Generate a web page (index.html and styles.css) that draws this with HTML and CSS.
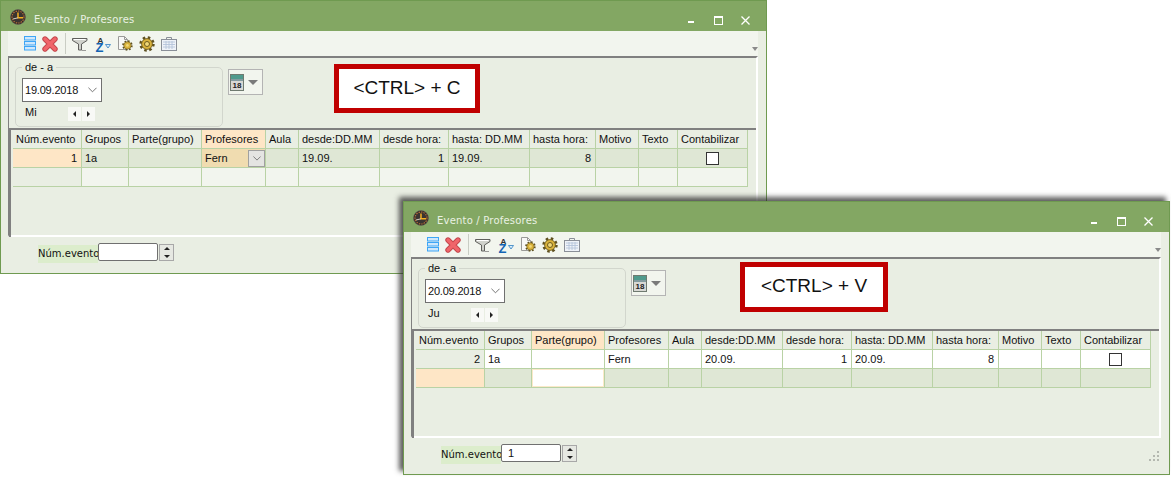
FILE: index.html
```html
<!DOCTYPE html>
<html lang="es">
<head>
    <meta charset="UTF-8">
    <meta name="viewport" content="width=device-width, initial-scale=1.0">
    <title>Evento / Profesores</title>
    <link rel="stylesheet" href="styles.css">
</head>
<body>
    <!-- Iconos compartidos por las dos ventanas -->
    <svg class="icon-defs" xmlns="http://www.w3.org/2000/svg">
        <symbol id="i-clock" viewBox="0 0 16 16">
            <circle cx="8" cy="8" r="7.6" fill="#2b2420"/>
            <circle cx="8" cy="8" r="6" fill="#3a3431" stroke="#b5703a" stroke-width="1.2" stroke-dasharray="1.5 1"/>
            <circle cx="8" cy="8" r="7.4" fill="none" stroke="#6d625c" stroke-width=".6"/>
            <path d="M8 3.5V8.8H13" fill="none" stroke="#f6b020" stroke-width="1.5"/>
            <path d="M3 10L8 8.8" stroke="#d8d0c0" stroke-width="1"/>
        </symbol>
        <symbol id="i-list" viewBox="0 0 12 15">
            <g fill="#cfe8fc" stroke="#3ea6f6">
                <rect x=".5" y=".5" width="11" height="3.5"/>
                <rect x=".5" y="5.5" width="11" height="3.5"/>
                <rect x=".5" y="10.5" width="11" height="3.5"/>
            </g>
        </symbol>
        <symbol id="i-delete" viewBox="0 0 16 16">
            <path d="M3 3L13 13M13 3L3 13" stroke="#c4474c" stroke-width="5.4" stroke-linecap="round"/>
            <path d="M3 3L13 13M13 3L3 13" stroke="#f0656a" stroke-width="3.4" stroke-linecap="round"/>
        </symbol>
        <symbol id="i-filter" viewBox="0 0 16 15">
            <path d="M.5 1.5H15V3.5L9.5 7V13H6.5V7L.5 3.5Z" fill="#d0d2cc" stroke="#5f5f5c"/>
            <path d="M2 2.5H13.5" stroke="#fff"/>
            <path d="M9.5 13.5H14" stroke="#9a9a98"/>
        </symbol>
        <symbol id="i-sort" viewBox="0 0 16 16">
            <text x="2.5" y="6.5" class="icon-letter icon-letter-a">A</text>
            <text x="0.5" y="15.5" class="icon-letter icon-letter-z">Z</text>
            <path d="M10.5 8.5H15.5L13 12Z" fill="#dceefb" stroke="#2e7fc0" stroke-width=".8"/>
        </symbol>
        <symbol id="i-gear" viewBox="0 0 16 16">
            <circle cx="8" cy="8" r="6.2" fill="none" stroke="#5e5020" stroke-width="3" stroke-dasharray="2.4 2.47"/>
            <circle cx="8" cy="8" r="5.4" fill="#d9b23c" stroke="#6f5c1c" stroke-width=".9"/>
            <circle cx="8" cy="8" r="2.5" fill="#f0d878" stroke="#6f5c1c"/>
        </symbol>
        <symbol id="i-docgear" viewBox="0 0 16 15">
            <path d="M1.5 .5H7.5L10.5 3.5V13.5H1.5Z" fill="#f8f8f6" stroke="#9a9a98"/>
            <path d="M7.5 .5V3.5H10.5" fill="none" stroke="#9a9a98"/>
            <g transform="translate(5 4) scale(.68)">
                <circle cx="8" cy="8" r="6.2" fill="none" stroke="#5e5020" stroke-width="3" stroke-dasharray="2.4 2.47"/>
                <circle cx="8" cy="8" r="5.4" fill="#d9b23c" stroke="#6f5c1c" stroke-width=".9"/>
                <circle cx="8" cy="8" r="2" fill="#f0d878"/>
            </g>
        </symbol>
        <symbol id="i-table" viewBox="0 0 16 14">
            <path d="M5.5 2.5V.5H10.5V2.5" fill="none" stroke="#8a8f98"/>
            <rect x=".5" y="2.5" width="15" height="11" fill="#eef2f8" stroke="#8a8f98"/>
            <path d="M2 5H14M2 7.5H14M2 10H14M5 4V12M8 4V12M11 4V12" stroke="#b4c4da" stroke-width=".9"/>
        </symbol>
        <symbol id="i-calendar" viewBox="0 0 14 17">
            <rect x=".5" y=".5" width="13" height="16" fill="#d8d8d4" stroke="#6f7a70"/>
            <rect x="1" y="1" width="12" height="4" fill="#4f9a8c"/>
            <path d="M1 6H13" stroke="#2f5f6a"/>
            <text x="7" y="14" class="icon-letter icon-letter-day">18</text>
        </symbol>
    </svg>

    <!-- Ventana 1: copiar -->
    <section class="window window-copy">
        <div class="titlebar">
            <svg class="title-icon"><use href="#i-clock"/></svg>
            <span class="title-text">Evento / Profesores</span>
            <div class="window-btns">
                <span class="btn-min"></span>
                <span class="btn-max"></span>
                <svg class="btn-close" viewBox="0 0 9 9"><path d="M.5 .5L8.5 8.5M8.5 .5L.5 8.5" stroke="#fff" stroke-width="1.3"/></svg>
            </div>
        </div>
        <div class="toolbar">
            <svg class="tool tool-list"><use href="#i-list"/></svg>
            <svg class="tool tool-delete"><use href="#i-delete"/></svg>
            <span class="tool-sep"></span>
            <svg class="tool tool-filter"><use href="#i-filter"/></svg>
            <svg class="tool tool-sort"><use href="#i-sort"/></svg>
            <svg class="tool tool-doc"><use href="#i-docgear"/></svg>
            <svg class="tool tool-gear"><use href="#i-gear"/></svg>
            <svg class="tool tool-table"><use href="#i-table"/></svg>
            <span class="toolbar-more"></span>
        </div>
        <div class="panel">
            <div class="form-row">
                <fieldset class="date-group">
                    <legend>de - a</legend>
                    <div class="date-combo">
                        <span>19.09.2018</span>
                        <svg class="chevron" viewBox="0 0 10 6"><path d="M.5 .5L5 5L9.5 .5" fill="none" stroke="#666"/></svg>
                    </div>
                    <div class="date-foot">
                        <span class="weekday">Mi</span>
                        <div class="date-nav">
                            <span class="nav-btn"><i class="arrow-left"></i></span>
                            <span class="nav-btn"><i class="arrow-right"></i></span>
                        </div>
                    </div>
                </fieldset>
                <div class="calendar-btn">
                    <svg class="calendar-icon"><use href="#i-calendar"/></svg>
                    <i class="arrow-down"></i>
                </div>
                <div class="shortcut">&lt;CTRL&gt; + C</div>
            </div>
            <div class="table-frame">
                <table class="grid">
                    <colgroup>
                        <col class="c-num"><col class="c-grupos"><col class="c-parte"><col class="c-prof"><col class="c-aula"><col class="c-desde"><col class="c-dhora"><col class="c-hasta"><col class="c-hhora"><col class="c-motivo"><col class="c-texto"><col class="c-conta">
                    </colgroup>
                    <tr class="head">
                        <th>Núm.evento</th><th>Grupos</th><th>Parte(grupo)</th><th class="head-active">Profesores</th><th>Aula</th><th>desde:DD.MM</th><th>desde hora:</th><th>hasta: DD.MM</th><th>hasta hora:</th><th>Motivo</th><th>Texto</th><th>Contabilizar</th>
                    </tr>
                    <tr class="row-current">
                        <td class="num cell-marker">1</td><td>1a</td><td></td>
                        <td class="cell-edit">
                            <div class="cell-combo">
                                <span>Fern</span>
                                <span class="cell-combo-btn"><svg class="chevron-small" viewBox="0 0 10 6"><path d="M.5 .5L5 5L9.5 .5" fill="none" stroke="#666"/></svg></span>
                            </div>
                        </td>
                        <td></td><td>19.09.</td><td class="num">1</td><td>19.09.</td><td class="num">8</td><td></td><td></td>
                        <td class="check"><span class="checkbox"></span></td>
                    </tr>
                    <tr class="row-plain">
                        <td class="cell-side"></td><td></td><td></td><td></td><td></td><td></td><td></td><td></td><td></td><td></td><td></td><td></td>
                    </tr>
                </table>
            </div>
        </div>
        <div class="footer">
            <label class="footer-label">Núm.evento</label>
            <div class="footer-input"></div>
            <div class="spinner"><span><i class="spin-up"></i></span><span><i class="spin-down"></i></span></div>
        </div>
    </section>

    <!-- Ventana 2: pegar -->
    <section class="window window-paste">
        <div class="titlebar">
            <svg class="title-icon"><use href="#i-clock"/></svg>
            <span class="title-text">Evento / Profesores</span>
            <div class="window-btns">
                <span class="btn-min"></span>
                <span class="btn-max"></span>
                <svg class="btn-close" viewBox="0 0 9 9"><path d="M.5 .5L8.5 8.5M8.5 .5L.5 8.5" stroke="#fff" stroke-width="1.3"/></svg>
            </div>
        </div>
        <div class="toolbar">
            <svg class="tool tool-list"><use href="#i-list"/></svg>
            <svg class="tool tool-delete"><use href="#i-delete"/></svg>
            <span class="tool-sep"></span>
            <svg class="tool tool-filter"><use href="#i-filter"/></svg>
            <svg class="tool tool-sort"><use href="#i-sort"/></svg>
            <svg class="tool tool-doc"><use href="#i-docgear"/></svg>
            <svg class="tool tool-gear"><use href="#i-gear"/></svg>
            <svg class="tool tool-table"><use href="#i-table"/></svg>
            <span class="toolbar-more"></span>
        </div>
        <div class="panel">
            <div class="form-row">
                <fieldset class="date-group">
                    <legend>de - a</legend>
                    <div class="date-combo">
                        <span>20.09.2018</span>
                        <svg class="chevron" viewBox="0 0 10 6"><path d="M.5 .5L5 5L9.5 .5" fill="none" stroke="#666"/></svg>
                    </div>
                    <div class="date-foot">
                        <span class="weekday">Ju</span>
                        <div class="date-nav">
                            <span class="nav-btn"><i class="arrow-left"></i></span>
                            <span class="nav-btn"><i class="arrow-right"></i></span>
                        </div>
                    </div>
                </fieldset>
                <div class="calendar-btn">
                    <svg class="calendar-icon"><use href="#i-calendar"/></svg>
                    <i class="arrow-down"></i>
                </div>
                <div class="shortcut">&lt;CTRL&gt; + V</div>
            </div>
            <div class="table-frame">
                <table class="grid">
                    <colgroup>
                        <col class="c-num"><col class="c-grupos"><col class="c-parte"><col class="c-prof"><col class="c-aula"><col class="c-desde"><col class="c-dhora"><col class="c-hasta"><col class="c-hhora"><col class="c-motivo"><col class="c-texto"><col class="c-conta">
                    </colgroup>
                    <tr class="head">
                        <th>Núm.evento</th><th>Grupos</th><th class="head-active">Parte(grupo)</th><th>Profesores</th><th>Aula</th><th>desde:DD.MM</th><th>desde hora:</th><th>hasta: DD.MM</th><th>hasta hora:</th><th>Motivo</th><th>Texto</th><th>Contabilizar</th>
                    </tr>
                    <tr class="row-white">
                        <td class="num cell-side">2</td><td>1a</td><td></td><td>Fern</td><td></td><td>20.09.</td><td class="num">1</td><td>20.09.</td><td class="num">8</td><td></td><td></td>
                        <td class="check"><span class="checkbox"></span></td>
                    </tr>
                    <tr class="row-current">
                        <td class="cell-marker"></td><td></td><td class="cell-input"></td><td></td><td></td><td></td><td></td><td></td><td></td><td></td><td></td><td></td>
                    </tr>
                </table>
            </div>
        </div>
        <div class="footer">
            <label class="footer-label">Núm.evento</label>
            <div class="footer-input">1</div>
            <div class="spinner"><span><i class="spin-up"></i></span><span><i class="spin-down"></i></span></div>
            <svg class="grip" viewBox="0 0 10 10">
                <g fill="#b4b8b0">
                    <rect x="8" y="0" width="2" height="2"/><rect x="4" y="4" width="2" height="2"/><rect x="8" y="4" width="2" height="2"/>
                    <rect x="0" y="8" width="2" height="2"/><rect x="4" y="8" width="2" height="2"/><rect x="8" y="8" width="2" height="2"/>
                </g>
            </svg>
        </div>
    </section>
</body>
</html>
```

FILE: styles.css
```css
/* General */
body {
    margin: 0;
    background-color: #fff;
    font-family: "Liberation Sans", Arial, sans-serif;
    color: #111;
}

.icon-defs {
    display: none;
}

.icon-letter {
    font-family: "Liberation Sans", Arial, sans-serif;
    font-weight: bold;
}

.icon-letter-a {
    font-size: 8px;
    fill: #333;
}

.icon-letter-z {
    font-size: 13px;
    fill: #1464b4;
}

.icon-letter-day {
    font-size: 8px;
    fill: #222;
    text-anchor: middle;
}

/* Ventanas */
.window {
    position: absolute;
    box-sizing: border-box;
    width: 767px;
    height: 274px;
    display: flex;
    flex-direction: column;
    background-color: #e9eee3;
    border: 1px solid #6f9a50;
}

.window-copy {
    left: 0;
    top: 0;
}

.window-paste {
    left: 403px;
    top: 201px;
    box-shadow: -4px -4px 5px rgba(40, 40, 40, 0.75);
}

.titlebar {
    height: 30px;
    flex: none;
    display: flex;
    align-items: center;
    background-color: #83a763;
}

.title-icon {
    width: 16px;
    height: 16px;
    margin: 2px 0 0 9px;
}

.title-text {
    margin: 6px 0 0 8px;
    font-family: "DejaVu Sans", sans-serif;
    font-size: 10px;
    letter-spacing: 0.2px;
    color: #eaf1e2;
}

.window-btns {
    margin: 0 0 0 auto;
    display: flex;
    align-items: flex-start;
    padding-top: 9px;
}

.btn-min {
    width: 6px;
    height: 2px;
    margin: 5px 20px 0 0;
    background-color: #fff;
}

.btn-max {
    box-sizing: border-box;
    width: 9px;
    height: 9px;
    margin-right: 18px;
    border: 1px solid #fff;
    border-top-width: 2px;
}

.btn-close {
    width: 9px;
    height: 9px;
    margin-right: 16px;
}

.toolbar {
    height: 25px;
    flex: none;
    margin: 0 8px 0 7px;
    display: flex;
    align-items: center;
    position: relative;
    background-color: #f2f5ee;
}

.tool {
    flex: none;
}

.tool-list {
    width: 12px;
    height: 15px;
    margin: 0 0 0 16px;
}

.tool-delete {
    width: 16px;
    height: 16px;
    margin: 0 0 0 6px;
}

.tool-sep {
    width: 1px;
    height: 21px;
    margin-left: 7px;
    background-color: #c9cdc4;
}

.tool-filter {
    width: 16px;
    height: 15px;
    margin: 2px 0 0 6px;
}

.tool-sort {
    width: 16px;
    height: 16px;
    margin: 0 0 0 7px;
}

.tool-doc {
    width: 16px;
    height: 15px;
    margin: 0 0 0 6px;
}

.tool-gear {
    width: 16px;
    height: 16px;
    margin: 0 0 0 6px;
}

.tool-table {
    width: 16px;
    height: 14px;
    margin: 1px 0 0 6px;
}

.toolbar-more {
    position: absolute;
    right: 0;
    bottom: 5px;
    border-left: 3px solid transparent;
    border-right: 3px solid transparent;
    border-top: 4px solid #8a8a8a;
}

/* Panel principal */
.panel {
    box-sizing: border-box;
    height: 181px;
    flex: none;
    margin: 0 8px 0 7px;
    border-top: 2px solid #808080;
    border-left: 1px solid #808080;
    border-right: 2px solid #fff;
    border-bottom: 2px solid #fff;
}

.form-row {
    height: 70px;
    display: flex;
    align-items: flex-start;
}

.date-group {
    box-sizing: border-box;
    width: 208px;
    height: 66px;
    min-width: 0;
    margin: 3px 0 0 6px;
    padding: 4px 6px 0;
    border: 1px solid #d2d6cd;
    border-radius: 5px;
}

.date-group legend {
    margin-left: 0;
    padding: 0 3px;
    font-size: 11px;
    line-height: 13px;
}

.date-combo {
    box-sizing: border-box;
    width: 80px;
    height: 24px;
    display: flex;
    align-items: center;
    justify-content: space-between;
    padding: 0 4px 0 2px;
    background-color: #fff;
    border: 1px solid #707070;
    font-size: 11px;
    letter-spacing: -0.2px;
}

.chevron {
    width: 9px;
    height: 6px;
}

.date-foot {
    display: flex;
    align-items: flex-start;
    padding: 5px 0 0 3px;
}

.weekday {
    margin-top: -2px;
    font-size: 11px;
    line-height: 14px;
}

.date-nav {
    margin-left: 31px;
    display: flex;
    gap: 1px;
}

.nav-btn {
    width: 13px;
    height: 14px;
    display: flex;
    align-items: center;
    justify-content: center;
    background-color: #f8f9f6;
}

.arrow-left {
    border-top: 3px solid transparent;
    border-bottom: 3px solid transparent;
    border-right: 3px solid #222;
}

.arrow-right {
    border-top: 3px solid transparent;
    border-bottom: 3px solid transparent;
    border-left: 3px solid #222;
}

.calendar-btn {
    box-sizing: border-box;
    width: 35px;
    height: 26px;
    margin: 11px 0 0 5px;
    display: flex;
    align-items: center;
    background-color: #f2f5ee;
    border: 1px solid #b4b4b4;
}

.calendar-icon {
    width: 14px;
    height: 17px;
    margin-left: 1px;
}

.arrow-down {
    margin-left: 4px;
    border-left: 5px solid transparent;
    border-right: 5px solid transparent;
    border-top: 5px solid #7a7a7a;
}

.shortcut {
    box-sizing: border-box;
    width: 146px;
    height: 49px;
    margin: 6px 0 0 71px;
    padding-bottom: 2px;
    display: flex;
    align-items: center;
    justify-content: center;
    background-color: #fff;
    border: 5px solid #c00000;
    font-size: 19px;
}

.window-paste .shortcut {
    width: 148px;
    height: 50px;
    margin: 3px 0 0 74px;
}

/* Tabla */
.table-frame {
    height: 107px;
    border-top: 2px solid #808080;
    border-left: 2px solid #808080;
}

.grid {
    table-layout: fixed;
    width: 735px;
    margin-left: 2px;
    border-collapse: separate;
    border-spacing: 0;
}

.c-num { width: 69px; }
.c-grupos { width: 47px; }
.c-parte { width: 73px; }
.c-prof { width: 64px; }
.c-aula { width: 33px; }
.c-desde { width: 81px; }
.c-dhora { width: 69px; }
.c-hasta { width: 81px; }
.c-hhora { width: 66px; }
.c-motivo { width: 43px; }
.c-texto { width: 39px; }
.c-conta { width: 70px; }

.grid th,
.grid td {
    box-sizing: border-box;
    height: 19px;
    padding: 0 0 0 3px;
    border-right: 1px solid #b9d2a5;
    border-bottom: 1px solid #b9d2a5;
    font-size: 11px;
    font-weight: normal;
    text-align: left;
    overflow: hidden;
    white-space: nowrap;
}

.grid th {
    background-color: #e9eee3;
}

.grid .head-active {
    background-color: #fee6c6;
}

.row-current td {
    background-color: #dfe7d5;
}

.row-plain td {
    background-color: #f2f5ee;
}

.row-white td {
    background-color: #fff;
}

.grid .num {
    padding-right: 4px;
    text-align: right;
}

.grid .cell-marker {
    background-color: #fee6c6;
}

.grid .cell-side {
    background-color: #e9eee3;
}

.grid .cell-edit {
    padding: 0 0 0 3px;
    background-color: #f0dcb0;
}

.grid .cell-input {
    background-color: #fff;
    box-shadow: inset 0 0 0 1px #fbe9c9;
}

.cell-combo {
    display: flex;
    align-items: center;
    justify-content: space-between;
}

.cell-combo-btn {
    box-sizing: border-box;
    width: 17px;
    height: 17px;
    display: flex;
    align-items: center;
    justify-content: center;
    background-color: #e4e4e2;
    border: 1px solid #a0a0a0;
}

.chevron-small {
    width: 8px;
    height: 5px;
}

.grid .check {
    padding: 0;
    text-align: center;
}

.checkbox {
    box-sizing: border-box;
    display: block;
    width: 13px;
    height: 13px;
    margin: 0 auto;
    background-color: #fff;
    border: 1px solid #333;
}

/* Pie */
.footer {
    flex: 1;
    display: flex;
    align-items: flex-start;
    padding: 6px 10px 0 37px;
}

.footer-label {
    width: 60px;
    height: 18px;
    margin-top: 2px;
    background-color: #dcedcc;
    font-family: "DejaVu Sans", sans-serif;
    font-size: 10px;
    line-height: 17px;
    white-space: nowrap;
    overflow: hidden;
}

.footer-input {
    box-sizing: border-box;
    width: 60px;
    height: 18px;
    padding-left: 6px;
    background-color: #fff;
    border: 1px solid #707070;
    border-radius: 2px;
    font-size: 11px;
    line-height: 16px;
}

.spinner {
    box-sizing: border-box;
    width: 15px;
    height: 17px;
    margin: 1px 0 0 1px;
    display: flex;
    flex-direction: column;
    border: 1px solid #a8a8a8;
    background-color: #e6e8e2;
}

.spinner span {
    flex: 1;
    display: flex;
    align-items: center;
    justify-content: center;
}

.spin-up {
    border-left: 3px solid transparent;
    border-right: 3px solid transparent;
    border-bottom: 3px solid #222;
}

.spin-down {
    border-left: 3px solid transparent;
    border-right: 3px solid transparent;
    border-top: 3px solid #222;
}

.grip {
    width: 10px;
    height: 10px;
    margin: 7px 0 0 auto;
}
```
